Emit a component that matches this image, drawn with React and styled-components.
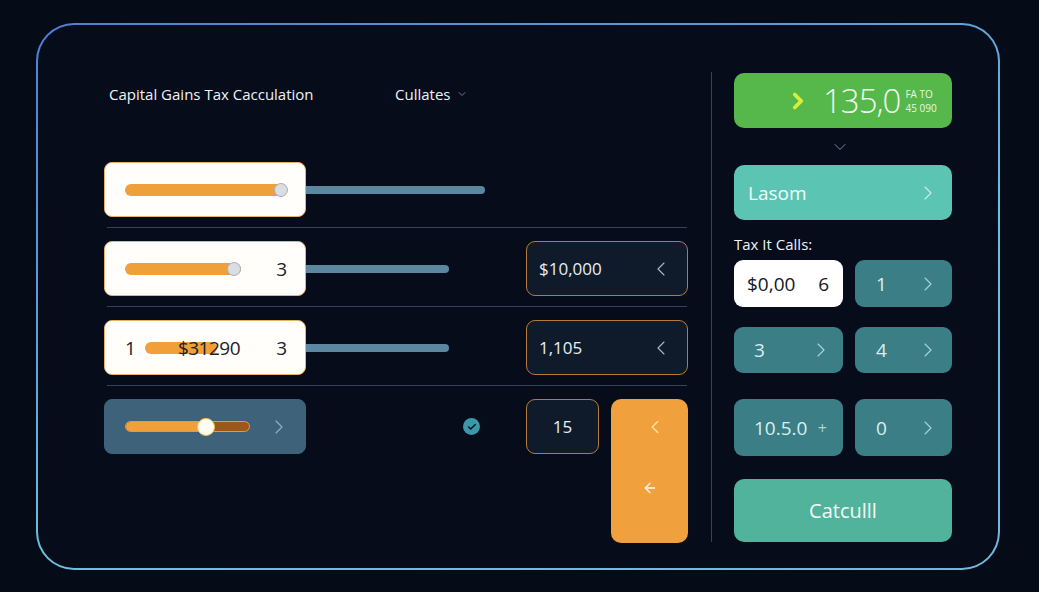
import React from 'react'
import styled, { createGlobalStyle } from 'styled-components'
import { ChevronLeft, ChevronRight, ChevronDown, ArrowLeft, Check } from 'lucide-react'

const GlobalStyle = createGlobalStyle`
  html, body {
    margin: 0;
    background: #050b17;
  }
  body {
    font-family: "Open Sans", "Noto Sans", sans-serif;
    color: #e9eef4;
  }
`

function App() {
  return (
    <Page>
      <GlobalStyle />
      <Frame>
        <LeftPanel>
          <Header>
            <Title>Capital Gains Tax Cacculation</Title>
            <Dropdown>
              Cullates <ChevronDown size={12} strokeWidth={1.5} color="#8d9bb0" />
            </Dropdown>
          </Header>

          <Row>
            <Card>
              <Track $w={162}>
                <Knob $at={156} />
              </Track>
            </Card>
            <Bar $w={179} />
          </Row>
          <RowLine />

          <Row>
            <Card>
              <Track $w={116}>
                <Knob $at={109} />
              </Track>
              <CardNum>3</CardNum>
            </Card>
            <Bar $w={143} />
            <Field>
              $10,000 <ChevronLeft size={24} strokeWidth={1.1} color="#aab8c8" />
            </Field>
          </Row>
          <RowLine />

          <Row>
            <Card>
              <CardText>1</CardText>
              <Track $w={72} $ml={9} />
              <Amount>$31290</Amount>
              <CardNum>3</CardNum>
            </Card>
            <Bar $w={143} />
            <Field>
              1,105 <ChevronLeft size={24} strokeWidth={1.1} color="#aab8c8" />
            </Field>
          </Row>
          <RowLine />

          <Row $top>
            <Card $slate>
              <SplitTrack>
                <SplitFill />
                <BigKnob />
              </SplitTrack>
              <ChevronRight size={24} strokeWidth={1.1} color="#8fb3c5" style={{ marginLeft: 'auto' }} />
            </Card>
            <CheckSpot>
              <CheckDot>
                <Check size={10} strokeWidth={3.5} color="#07151f" />
              </CheckDot>
            </CheckSpot>
            <SmallField>15</SmallField>
            <OrangeButton>
              <ChevronLeft size={22} strokeWidth={1.5} color="#ffe6a0" />
              <ArrowLeft size={16} strokeWidth={2} color="#fff7ea" />
            </OrangeButton>
          </Row>
        </LeftPanel>

        <Divider />

        <RightPanel>
          <ResultCard>
            <ChevronRight size={26} strokeWidth={3.5} color="#d6ee3c" />
            <BigValue>135,0</BigValue>
            <Stack>
              <span>FA TO</span>
              <span>45 090</span>
            </Stack>
          </ResultCard>
          <DownSpot>
            <ChevronDown size={20} strokeWidth={1.1} color="#8593a6" />
          </DownSpot>
          <SelectCard>
            Lasom
            <ChevronRight size={24} strokeWidth={1.1} color="#cdeee8" />
          </SelectCard>
          <Label>Tax It Calls:</Label>

          <KeyRow $h={47}>
            <Key $light>
              <span>$0,00</span>
              <span>6</span>
            </Key>
            <Key $narrow>
              <span>1</span>
              <ChevronRight size={24} strokeWidth={1.1} color="#a6d6d8" />
            </Key>
          </KeyRow>
          <KeyRow $h={46} $mt={20}>
            <Key>
              <span>3</span>
              <ChevronRight size={24} strokeWidth={1.1} color="#a6d6d8" />
            </Key>
            <Key $narrow>
              <span>4</span>
              <ChevronRight size={24} strokeWidth={1.1} color="#a6d6d8" />
            </Key>
          </KeyRow>
          <KeyRow $h={57} $mt={26}>
            <Key>
              <span>10.5.0</span>
              <Plus>+</Plus>
            </Key>
            <Key $narrow>
              <span>0</span>
              <ChevronRight size={24} strokeWidth={1.1} color="#a6d6d8" />
            </Key>
          </KeyRow>

          <CalcButton>Catculll</CalcButton>
        </RightPanel>
      </Frame>
    </Page>
  )
}

const Page = styled.div`
  width: 1039px;
  height: 592px;
  padding: 23px 0 0 36px;
  box-sizing: border-box;
  overflow: hidden;
`
const Frame = styled.div`
  width: 964px;
  height: 547px;
  box-sizing: border-box;
  display: flex;
  align-items: flex-start;
  padding: 48px 46px 0 66px;
  border: 2px solid transparent;
  border-radius: 38px;
  background:
    linear-gradient(#060c1a, #060c1a) padding-box,
    linear-gradient(160deg, #4f7ed6 0%, #5f9fd8 35%, #6cc0dc 60%, #74b8dc 100%) border-box;
`
const LeftPanel = styled.div`
  width: 584px;
  flex: none;
  display: flex;
  flex-direction: column;
`
const Header = styled.div`
  height: 41px;
  display: flex;
  align-items: center;
  padding-left: 5px;
  margin-bottom: 48px;
  font-size: 15px;
  color: #eef2f7;
`
const Title = styled.div`
  width: 286px;
  flex: none;
`
const Dropdown = styled.div`
  display: flex;
  align-items: center;
  gap: 6px;
`
const Row = styled.div`
  height: 55px;
  display: flex;
  align-items: ${p => (p.$top ? 'flex-start' : 'center')};
`
const RowLine = styled.div`
  height: 1px;
  width: 580px;
  margin: 10px 0 13px 3px;
  background: #33445a;
`
const Card = styled.div`
  width: 202px;
  height: 55px;
  flex: none;
  box-sizing: border-box;
  display: flex;
  align-items: center;
  padding: 0 14px 0 20px;
  border-radius: 8px;
  background: ${p => (p.$slate ? '#3e6279' : '#fffefb')};
  border: 1.5px solid ${p => (p.$slate ? '#3e6279' : '#e8b468')};
  color: #1d2126;
`
const Track = styled.div`
  position: relative;
  flex: none;
  width: ${p => p.$w}px;
  height: 12px;
  margin-left: ${p => p.$ml || 0}px;
  border-radius: 6px;
  background: #f0a03a;
`
const Knob = styled.span`
  position: absolute;
  top: 50%;
  left: ${p => p.$at}px;
  width: 14px;
  height: 14px;
  box-sizing: border-box;
  transform: translate(-50%, -50%);
  border-radius: 50%;
  background: #dadee3;
  border: 1px solid #a9b0b8;
`
const CardNum = styled.span`
  margin-left: auto;
  margin-right: 4px;
  font-size: 19px;
`
const CardText = styled.span`
  font-size: 19px;
`
const Amount = styled.span`
  margin-left: -39px;
  font-size: 19px;
  letter-spacing: -0.5px;
  position: relative;
`
const SplitTrack = styled.div`
  position: relative;
  width: 125px;
  height: 11px;
  box-sizing: border-box;
  border-radius: 6px;
  background: #9b581c;
  border: 1px solid #e89a3a;
`
const SplitFill = styled.div`
  width: 80px;
  height: 100%;
  border-radius: 6px 0 0 6px;
  background: #f0a03a;
`
const BigKnob = styled.span`
  position: absolute;
  top: 50%;
  left: 80px;
  width: 18px;
  height: 18px;
  box-sizing: border-box;
  transform: translate(-50%, -50%);
  border-radius: 50%;
  background: #fffdf2;
  border: 1.5px solid #f2c25a;
`
const Bar = styled.div`
  width: ${p => p.$w}px;
  height: 8px;
  flex: none;
  border-radius: 0 4px 4px 0;
  background: #5b87a0;
`
const Field = styled.div`
  margin-left: auto;
  width: 162px;
  height: 55px;
  box-sizing: border-box;
  display: flex;
  align-items: center;
  justify-content: space-between;
  padding: 0 14px 0 12px;
  border-radius: 9px;
  background: #0f1b2a;
  border: 1.5px solid #b67a38;
  font-size: 17px;
  color: #e8eef4;
`
const SmallField = styled(Field)`
  margin-left: 46px;
  width: 73px;
  justify-content: center;
  padding: 0;
`
const CheckSpot = styled.div`
  height: 55px;
  margin-left: 157px;
  display: flex;
  align-items: center;
`
const CheckDot = styled.span`
  width: 17px;
  height: 17px;
  border-radius: 50%;
  background: #3c97a9;
  display: flex;
  align-items: center;
  justify-content: center;
`
const OrangeButton = styled.div`
  margin-left: 12px;
  width: 77px;
  height: 144px;
  box-sizing: border-box;
  border-radius: 10px;
  background: #f0a03c;
  display: flex;
  flex-direction: column;
  align-items: center;
  padding-top: 17px;
  gap: 42px;
  svg:first-child {
    margin-left: 10px;
  }
`
const Divider = styled.div`
  width: 1px;
  height: 470px;
  flex: none;
  margin: -1px 22px 0 23px;
  background: #37445a;
`
const RightPanel = styled.div`
  width: 218px;
  flex: none;
  display: flex;
  flex-direction: column;
`
const ResultCard = styled.div`
  height: 55px;
  border-radius: 10px;
  background: #56b84a;
  display: flex;
  align-items: center;
  padding-left: 51px;
`
const BigValue = styled.span`
  margin-left: 12px;
  font-size: 33px;
  font-weight: 300;
  letter-spacing: -1px;
  color: #f2fbef;
  line-height: 1;
`
const Stack = styled.span`
  margin-left: 5px;
  display: flex;
  flex-direction: column;
  font-size: 10px;
  line-height: 14px;
  color: #eaf7e6;
`
const DownSpot = styled.div`
  height: 37px;
  display: flex;
  align-items: center;
  justify-content: center;
  padding-right: 6px;
`
const SelectCard = styled.div`
  height: 55px;
  box-sizing: border-box;
  border-radius: 10px;
  background: #5cc4b2;
  display: flex;
  align-items: center;
  justify-content: space-between;
  padding: 0 12px 0 14px;
  font-size: 19px;
  color: #f4fbfa;
`
const Label = styled.div`
  height: 20px;
  margin: 14px 0 6px;
  font-size: 15px;
  line-height: 20px;
  color: #eef2f6;
`
const KeyRow = styled.div`
  height: ${p => p.$h}px;
  margin-top: ${p => p.$mt || 0}px;
  display: grid;
  grid-template-columns: 109px 97px;
  column-gap: 12px;
`
const Key = styled.div`
  box-sizing: border-box;
  border-radius: 9px;
  background: ${p => (p.$light ? '#ffffff' : '#3b7e85')};
  color: ${p => (p.$light ? '#15191e' : '#d9eef0')};
  display: flex;
  align-items: center;
  justify-content: space-between;
  padding: ${p => (p.$narrow ? '0 12px 0 21px' : '0 10px 0 20px')};
  padding-left: ${p => (p.$light ? '13px' : undefined)};
  padding-right: ${p => (p.$light ? '14px' : undefined)};
  font-size: 19px;
`
const Plus = styled.span`
  font-size: 16px;
  color: #a6d6d8;
  margin-right: 6px;
`
const CalcButton = styled.div`
  margin-top: 23px;
  height: 63px;
  border-radius: 10px;
  background: #52b39c;
  display: flex;
  align-items: center;
  justify-content: center;
  font-size: 20px;
  color: #f2fbf8;
`

export default App
